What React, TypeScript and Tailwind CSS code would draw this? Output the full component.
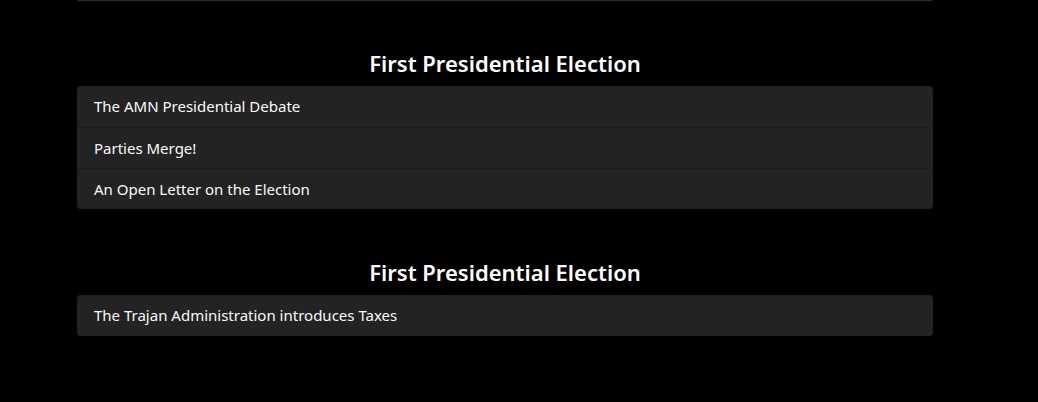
const sections = [
  {
    title: 'First Presidential Election',
    posts: ['The AMN Presidential Debate', 'Parties Merge!', 'An Open Letter on the Election'],
  },
  {
    title: 'First Presidential Election',
    posts: ['The Trajan Administration introduces Taxes'],
  },
]

export default function App() {
  return (
    <div className="min-h-[402px] bg-black text-white font-['Noto_Sans',sans-serif]">
      <div className="w-[856px] ml-[77px]">
        <div className="h-px bg-[#2b2b2b] rounded-b" />
        {sections.map((section, i) => (
          <section key={i} className={i === 0 ? 'pt-[48px]' : 'pt-[49px]'}>
            <h2 className="text-center text-[22px] leading-[30px] font-semibold mb-[8px] -mt-[1px]">
              {section.title}
            </h2>
            <ul className="bg-[#232323] rounded-[4px] overflow-hidden">
              {section.posts.map((post, j) => (
                <li
                  key={j}
                  className={`h-[41px] px-[17px] flex items-center text-[15px] text-[#fafafa] ${j > 0 ? 'border-t border-[#1c1c1c]' : ''}`}
                >
                  {post}
                </li>
              ))}
            </ul>
          </section>
        ))}
      </div>
    </div>
  )
}
